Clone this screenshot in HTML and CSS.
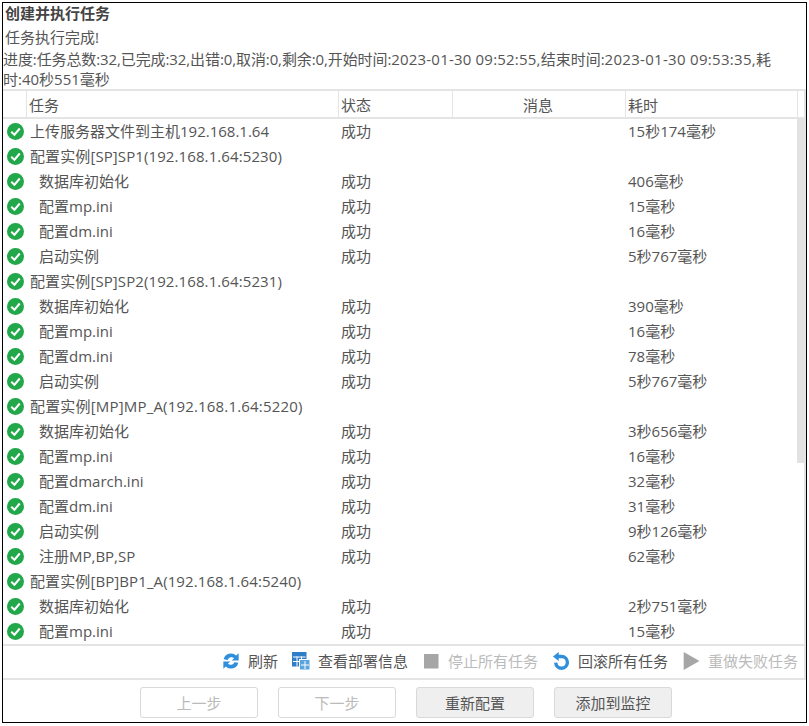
FILE: index.html
```html
<!DOCTYPE html>
<html lang="zh">
<head>
<meta charset="utf-8">
<title>创建并执行任务</title>
<link rel="stylesheet" href="styles.css">
</head>
<body>
<div class="dialog">
  <div class="title">创建并执行任务</div>
  <div class="status">任务执行完成!</div>
  <div class="progress"><span class="p-lead">进度:任务总数:32,已完成:32,出错:0,取消:0,剩余:0,开始时间:</span><span class="p-date">2023-01-30 09:52:55,</span><span class="p-end">结束时间:</span><span class="p-date2">2023-01-30 09:53:35,</span>耗时:40秒551毫秒</div>
  <svg class="defs" width="0" height="0"><defs>
    <g id="ok"><circle cx="8" cy="8" r="8" fill="#22a84a"/><path d="M4 8.2 7 11l5-5.8" fill="none" stroke="#fff" stroke-width="1.9"/></g>
  </defs></svg>
  <div class="grid">
    <div class="row head"><div class="c0"></div><div class="c1">任务</div><div class="c2">状态</div><div class="c3">消息</div><div class="c4">耗时</div><div class="c5"></div></div>
    <div class="body">
      <div class="rows">
        <div class="row"><div class="c0"><svg class="ok" viewBox="0 0 16 16"><use href="#ok"/></svg></div><div class="c1">上传服务器文件到主机192.168.1.64</div><div class="c2">成功</div><div class="c3"></div><div class="c4">15秒174毫秒</div></div>
        <div class="row"><div class="c0"><svg class="ok" viewBox="0 0 16 16"><use href="#ok"/></svg></div><div class="c1 wide">配置实例[SP]SP1(192.168.1.64:5230)</div><div class="c2"></div><div class="c3"></div><div class="c4"></div></div>
        <div class="row"><div class="c0"><svg class="ok" viewBox="0 0 16 16"><use href="#ok"/></svg></div><div class="c1 sub">数据库初始化</div><div class="c2">成功</div><div class="c3"></div><div class="c4">406毫秒</div></div>
        <div class="row"><div class="c0"><svg class="ok" viewBox="0 0 16 16"><use href="#ok"/></svg></div><div class="c1 sub">配置mp.ini</div><div class="c2">成功</div><div class="c3"></div><div class="c4">15毫秒</div></div>
        <div class="row"><div class="c0"><svg class="ok" viewBox="0 0 16 16"><use href="#ok"/></svg></div><div class="c1 sub">配置dm.ini</div><div class="c2">成功</div><div class="c3"></div><div class="c4">16毫秒</div></div>
        <div class="row"><div class="c0"><svg class="ok" viewBox="0 0 16 16"><use href="#ok"/></svg></div><div class="c1 sub">启动实例</div><div class="c2">成功</div><div class="c3"></div><div class="c4">5秒767毫秒</div></div>
        <div class="row"><div class="c0"><svg class="ok" viewBox="0 0 16 16"><use href="#ok"/></svg></div><div class="c1 wide">配置实例[SP]SP2(192.168.1.64:5231)</div><div class="c2"></div><div class="c3"></div><div class="c4"></div></div>
        <div class="row"><div class="c0"><svg class="ok" viewBox="0 0 16 16"><use href="#ok"/></svg></div><div class="c1 sub">数据库初始化</div><div class="c2">成功</div><div class="c3"></div><div class="c4">390毫秒</div></div>
        <div class="row"><div class="c0"><svg class="ok" viewBox="0 0 16 16"><use href="#ok"/></svg></div><div class="c1 sub">配置mp.ini</div><div class="c2">成功</div><div class="c3"></div><div class="c4">16毫秒</div></div>
        <div class="row"><div class="c0"><svg class="ok" viewBox="0 0 16 16"><use href="#ok"/></svg></div><div class="c1 sub">配置dm.ini</div><div class="c2">成功</div><div class="c3"></div><div class="c4">78毫秒</div></div>
        <div class="row"><div class="c0"><svg class="ok" viewBox="0 0 16 16"><use href="#ok"/></svg></div><div class="c1 sub">启动实例</div><div class="c2">成功</div><div class="c3"></div><div class="c4">5秒767毫秒</div></div>
        <div class="row"><div class="c0"><svg class="ok" viewBox="0 0 16 16"><use href="#ok"/></svg></div><div class="c1 wider">配置实例[MP]MP_A(192.168.1.64:5220)</div><div class="c2"></div><div class="c3"></div><div class="c4"></div></div>
        <div class="row"><div class="c0"><svg class="ok" viewBox="0 0 16 16"><use href="#ok"/></svg></div><div class="c1 sub">数据库初始化</div><div class="c2">成功</div><div class="c3"></div><div class="c4">3秒656毫秒</div></div>
        <div class="row"><div class="c0"><svg class="ok" viewBox="0 0 16 16"><use href="#ok"/></svg></div><div class="c1 sub">配置mp.ini</div><div class="c2">成功</div><div class="c3"></div><div class="c4">16毫秒</div></div>
        <div class="row"><div class="c0"><svg class="ok" viewBox="0 0 16 16"><use href="#ok"/></svg></div><div class="c1 sub">配置dmarch.ini</div><div class="c2">成功</div><div class="c3"></div><div class="c4">32毫秒</div></div>
        <div class="row"><div class="c0"><svg class="ok" viewBox="0 0 16 16"><use href="#ok"/></svg></div><div class="c1 sub">配置dm.ini</div><div class="c2">成功</div><div class="c3"></div><div class="c4">31毫秒</div></div>
        <div class="row"><div class="c0"><svg class="ok" viewBox="0 0 16 16"><use href="#ok"/></svg></div><div class="c1 sub">启动实例</div><div class="c2">成功</div><div class="c3"></div><div class="c4">9秒126毫秒</div></div>
        <div class="row"><div class="c0"><svg class="ok" viewBox="0 0 16 16"><use href="#ok"/></svg></div><div class="c1 sub">注册MP,BP,SP</div><div class="c2">成功</div><div class="c3"></div><div class="c4">62毫秒</div></div>
        <div class="row"><div class="c0"><svg class="ok" viewBox="0 0 16 16"><use href="#ok"/></svg></div><div class="c1 wide">配置实例[BP]BP1_A(192.168.1.64:5240)</div><div class="c2"></div><div class="c3"></div><div class="c4"></div></div>
        <div class="row"><div class="c0"><svg class="ok" viewBox="0 0 16 16"><use href="#ok"/></svg></div><div class="c1 sub">数据库初始化</div><div class="c2">成功</div><div class="c3"></div><div class="c4">2秒751毫秒</div></div>
        <div class="row"><div class="c0"><svg class="ok" viewBox="0 0 16 16"><use href="#ok"/></svg></div><div class="c1 sub">配置mp.ini</div><div class="c2">成功</div><div class="c3"></div><div class="c4">15毫秒</div></div>
      </div>
      <div class="scroll"><div class="thumb"></div></div>
    </div>
  </div>
  <div class="toolbar">
    <span class="tool"><svg class="ic" viewBox="0 0 16 16"><path d="M1.5 6.5A6.6 6.6 0 0 1 12.6 3.2L14.8 1.2V7.6H8.6L10.8 5.5A3.6 3.6 0 0 0 5 7Z" fill="#2f8fdc"/><path d="M14.5 9.5A6.6 6.6 0 0 1 3.4 12.8L1.2 14.8V8.4H7.4L5.2 10.5A3.6 3.6 0 0 0 11 9Z" fill="#2f8fdc"/></svg>刷新</span>
    <span class="tool"><svg class="ic" viewBox="0 0 18 18"><rect x="0" y="0" width="14.5" height="14.5" fill="#2f7fc8"/><path d="M1 5h12.5M1 9.5h12.5M5 4.5v10M9.5 4.5v10" stroke="#fff"/><rect x="7.5" y="7.5" width="10.5" height="10.5" fill="#5aa5e0" stroke="#fff"/><path d="M9 13h8M13 9v8" stroke="#fff"/></svg>查看部署信息</span>
    <span class="tool off"><svg class="ic" viewBox="0 0 18 18"><rect x="2" y="2" width="14.5" height="14.5" fill="#a6a6a6"/></svg>停止所有任务</span>
    <span class="tool"><svg class="ic" viewBox="0 0 16 16"><path d="M6 0V8L0.8 4Z" fill="#2f8fdc"/><path d="M5 4H8.5A5.2 5.2 0 1 1 3.3 9.5" fill="none" stroke="#2f8fdc" stroke-width="3"/></svg>回滚所有任务</span>
    <span class="tool off"><svg class="ic" viewBox="0 0 16 16"><path d="M1.5 0 15.5 8 1.5 16Z" fill="#a6a6a6"/></svg>重做失败任务</span>
  </div>
  <div class="actions">
    <button class="btn" disabled>上一步</button>
    <button class="btn" disabled>下一步</button>
    <button class="btn">重新配置</button>
    <button class="btn">添加到监控</button>
  </div>
</div>
</body>
</html>
```
FILE: styles.css
```css
* { box-sizing: border-box; }
html, body { margin: 0; padding: 0; background: #fff; }
body { padding: 2px; width: 809px; height: 726px; overflow: hidden; }
.dialog {
  width: 805px;
  height: 721px;
  border: 1px solid #000;
  background: #fff;
  color: #555;
  font: 15px/20px "Open Sans", "Noto Sans CJK SC", sans-serif;
  display: flex;
  flex-direction: column;
}
.defs { position: absolute; }
.title { height: 22px; padding: 0 0 0 2px; font-weight: 700; color: #444; line-height: 20px; }
.status { height: 20px; padding: 0 0 0 2px; margin-top: 2px; line-height: 20px; }
.progress { height: 40px; margin-top: 2px; line-height: 20px; padding-right: 12px; }
.p-lead, .p-date, .p-end, .p-date2 { display: inline-block; white-space: pre; }
.p-lead { letter-spacing: -0.1px; }
.p-date { letter-spacing: 0.2px; }
.p-date2 { letter-spacing: 0.3px; }
.grid { border-top: 2px solid #e4e4e4; border-bottom: 2px solid #e4e4e4; border-right: 2px solid #e4e4e4; height: 557px; overflow: hidden; flex: none; }
.row { display: flex; height: 25px; line-height: 25px; }
.c0 { width: 24px; flex: none; display: flex; align-items: center; justify-content: center; padding-bottom: 1px; }
.c1 { width: 312px; flex: none; padding-left: 3px; white-space: nowrap; }
.c1.sub { padding-left: 12px; }
.c1.wide { letter-spacing: 0.1px; }
.c1.wider { letter-spacing: 0.18px; }
.c2 { width: 114px; flex: none; padding-left: 2px; }
.c3 { width: 173px; flex: none; text-align: center; }
.c4 { width: 172px; flex: none; padding-left: 2px; }
.c5 { flex: 1; }
.head { height: 28px; line-height: 28px; border-bottom: 2px solid #e4e4e4; }
.head > div { height: 100%; border-right: 1px solid #e4e4e4; padding-left: 2px; }
.head .c0 { width: 24px; padding: 0; }
.head .c3 { padding: 0 2px 0 0; }
.head .c5 { border-right: none; }
.body { display: flex; height: 525px; overflow: hidden; }
.rows { flex: 1; min-width: 0; }
.scroll { width: 7px; flex: none; background: #fff; }
.thumb { height: 344px; background: #e2e2e2; }
.ok { width: 17px; height: 17px; }
.toolbar { height: 34px; border-bottom: 2px solid #e4e4e4; border-right: 2px solid #e4e4e4; display: flex; justify-content: flex-end; align-items: center; padding: 0 6px 2px 0; gap: 14px; flex: none; }
.tool { display: inline-flex; align-items: center; gap: 8px; white-space: nowrap; }
.tool.off { color: #bbb; }
.ic { width: 18px; height: 18px; flex: none; }
.actions { flex: 1; display: flex; gap: 20px; padding: 7px 0 0 137px; align-items: flex-start; }
.btn {
  width: 118px;
  height: 31px;
  border: 1px solid #d9d9d9;
  border-radius: 3px;
  background: #efefef;
  color: #555;
  font: inherit;
  padding: 0;
}
.btn[disabled] { background: #fff; color: #bbb; }
```
